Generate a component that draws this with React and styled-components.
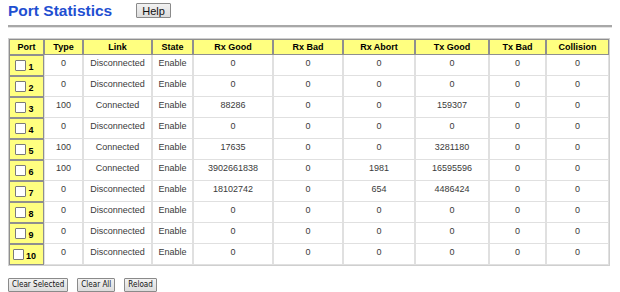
import React from "react";
import styled, { createGlobalStyle } from "styled-components";

const GlobalStyle = createGlobalStyle`
  body {
    margin: 0 8px;
    background: #ffffff;
    font-family: "Liberation Sans", Arial, sans-serif;
  }
`;

const columns = [
  { key: "port", label: "Port", width: 35 },
  { key: "type", label: "Type", width: 39 },
  { key: "link", label: "Link", width: 69 },
  { key: "state", label: "State", width: 41 },
  { key: "rxGood", label: "Rx Good", width: 80 },
  { key: "rxBad", label: "Rx Bad", width: 70 },
  { key: "rxAbort", label: "Rx Abort", width: 72 },
  { key: "txGood", label: "Tx Good", width: 74 },
  { key: "txBad", label: "Tx Bad", width: 57 },
  { key: "collision", label: "Collision", width: 63 },
];

const idle = { type: "0", link: "Disconnected", rxGood: "0", rxAbort: "0", txGood: "0" };

const rows = [
  { port: 1, ...idle },
  { port: 2, ...idle },
  { port: 3, type: "100", link: "Connected", rxGood: "88286", rxAbort: "0", txGood: "159307" },
  { port: 4, ...idle },
  { port: 5, type: "100", link: "Connected", rxGood: "17635", rxAbort: "0", txGood: "3281180" },
  { port: 6, type: "100", link: "Connected", rxGood: "3902661838", rxAbort: "1981", txGood: "16595596" },
  { port: 7, type: "0", link: "Disconnected", rxGood: "18102742", rxAbort: "654", txGood: "4486424" },
  { port: 8, ...idle },
  { port: 9, ...idle },
  { port: 10, ...idle },
];

const App = () => {
  return (
    <>
      <GlobalStyle />
      <TitleBar>
        <Title>Port Statistics</Title>
        <Button $big>Help</Button>
      </TitleBar>
      <Rule />
      <Table>
        <colgroup>
          {columns.map((c) => (
            <col key={c.key} style={{ width: c.width }} />
          ))}
        </colgroup>
        <thead>
          <HeadRow>
            {columns.map((c) => (
              <Th key={c.key}>{c.label}</Th>
            ))}
          </HeadRow>
        </thead>
        <tbody>
          {rows.map((r) => (
            <Row key={r.port}>
              <PortCell>
                <PortLabel>
                  <Check type="checkbox" />
                  <PortNo>{r.port}</PortNo>
                </PortLabel>
              </PortCell>
              <Td>{r.type}</Td>
              <Td>{r.link}</Td>
              <Td>Enable</Td>
              <Td>{r.rxGood}</Td>
              <Td>0</Td>
              <Td>{r.rxAbort}</Td>
              <Td>{r.txGood}</Td>
              <Td>0</Td>
              <Td>0</Td>
            </Row>
          ))}
        </tbody>
      </Table>
      <Actions>
        <Button>Clear Selected</Button>
        <Button>Clear All</Button>
        <Button>Reload</Button>
      </Actions>
    </>
  );
};

const TitleBar = styled.div`
  display: flex;
  align-items: center;
  gap: 24px;
  height: 21px;
`;

const Title = styled.h1`
  margin: 0;
  font-size: 15.5px;
  line-height: 20px;
  font-weight: bold;
  color: #1f4fd1;
`;

const Button = styled.button`
  font-family: ${(p) => (p.$big ? `"Liberation Sans", Arial, sans-serif` : `"DejaVu Sans Condensed", "DejaVu Sans", sans-serif`)};
  font-size: ${(p) => (p.$big ? "11px" : "8px")};
  line-height: 12px;
  height: ${(p) => (p.$big ? "15px" : "14px")};
  padding: 0 ${(p) => (p.$big ? "5px" : "3px")};
  color: #111;
  background: linear-gradient(#f2f2f2, #dcdcdc);
  border: 1px solid #8a8a8a;
  border-radius: 1px;
  cursor: pointer;
`;

const Rule = styled.div`
  margin: 4px -8px 0 0;
  height: 2px;
  background: #a8a8a8;
  border-bottom: 1px solid #e2e2e2;
`;

const Table = styled.table`
  margin-top: 10px;
  width: 602px;
  table-layout: fixed;
  border-collapse: separate;
  border-spacing: 0;
  border: 1px solid #cfcfcf;
  font-size: 9px;
`;

const HeadRow = styled.tr`
  height: 16px;
`;

const Th = styled.th`
  padding: 0;
  background: #ffff80;
  border: 1px solid #8f8f8f;
  color: #000;
  font-weight: bold;
  text-align: center;
  vertical-align: middle;
`;

const Row = styled.tr`
  height: 21px;
`;

const Td = styled.td`
  padding: 3px 0 0;
  border: 1px solid #e0e0e0;
  border-top: none;
  color: #3a3a3a;
  text-align: center;
  vertical-align: top;
`;

const PortCell = styled.td`
  padding: 0 4px 0 0;
  background: #ffff80;
  border: 1px solid #8f8f8f;
  vertical-align: middle;
`;

const PortLabel = styled.label`
  display: flex;
  align-items: flex-end;
  justify-content: center;
  gap: 2px;
`;

const Check = styled.input`
  appearance: none;
  margin: 0;
  width: 11px;
  height: 11px;
  background: #fff;
  border: 1px solid #7a7a7a;
  border-radius: 1px;
`;

const PortNo = styled.span`
  font-weight: bold;
  font-size: 9px;
  line-height: 9px;
  margin-bottom: -1px;
  color: #000;
`;

const Actions = styled.div`
  display: flex;
  gap: 9px;
  margin-top: 12px;
`;

export default App;
